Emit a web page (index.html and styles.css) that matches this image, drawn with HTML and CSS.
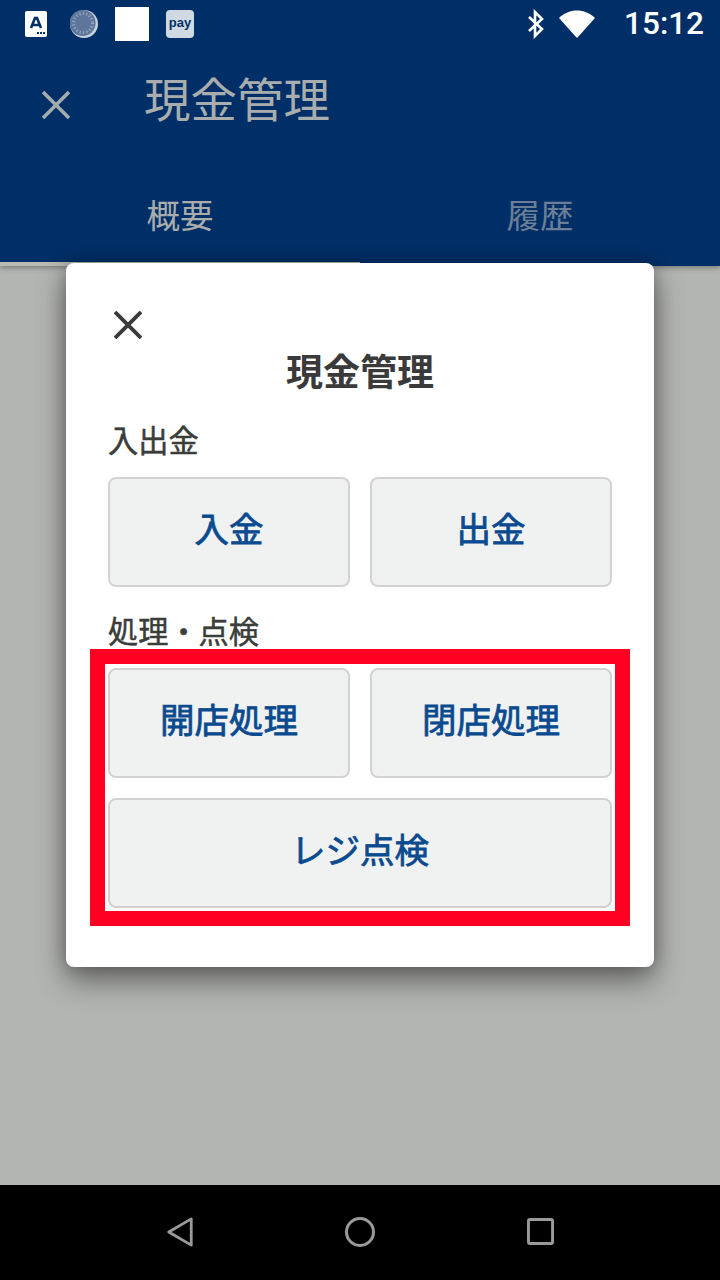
FILE: index.html
```html
<!DOCTYPE html>
<html lang="ja">
<head>
<meta charset="utf-8">
<title>現金管理</title>
<link rel="stylesheet" href="styles.css">
</head>
<body>
<div class="screen">
  <header class="appbar">
    <div class="status">
      <div class="status-left">
        <svg class="ic-a" viewBox="0 0 22 26"><rect width="22" height="26" rx="2" fill="#fff"/><path d="M6 17 L10 7 H12 L16 17 M7.5 14 H14.5" fill="none" stroke="#002f67" stroke-width="2.6"/><path d="M12 21h2v2h-2zM15 21h2v2h-2zM18 21h2v2h-2z" fill="#002f67"/></svg>
        <svg class="ic-sun" viewBox="0 0 28 28"><circle cx="14" cy="14" r="14" fill="#c9d2dc"/><circle cx="12.6" cy="13" r="13" fill="#5d7699"/><circle cx="13" cy="13" r="9.5" fill="none" stroke="#93a5bd" stroke-width="3" stroke-dasharray="1.2 2.2"/></svg>
        <div class="ic-white"></div>
        <div class="ic-pay">pay</div>
      </div>
      <div class="status-right">
        <svg class="ic-bt" viewBox="0 0 20 30"><path d="M3 8 L16 20 L9 27 V3 L16 10 L3 22" fill="none" stroke="#fff" stroke-width="2.6"/></svg>
        <svg class="ic-wifi" viewBox="0 0 36 28"><path d="M0 8 C10 -2 26 -2 36 8 L19 27 Q18 28 17 27 Z" fill="#fff"/></svg>
        <span class="clock">15:12</span>
      </div>
    </div>
    <div class="toolbar">
      <svg class="tb-close" viewBox="0 0 28 28"><path d="M1 1 L27 27 M27 1 L1 27" stroke="#a4abac" stroke-width="3.6" fill="none"/></svg>
      <span class="tb-title">現金管理</span>
    </div>
    <div class="tabs">
      <div class="tab tab-on">概要</div>
      <div class="tab tab-off">履歴</div>
    </div>
  </header>

  <main class="scrim"></main>

  <nav class="navbar">
    <svg class="nav-ic" viewBox="0 0 28 32"><path d="M2 16 L26 2 V30 Z" fill="none" stroke="#9a9a9a" stroke-width="3" stroke-linejoin="round"/></svg>
    <svg class="nav-ic" viewBox="0 0 32 32"><circle cx="16" cy="16" r="14.4" fill="none" stroke="#9a9a9a" stroke-width="3.2"/></svg>
    <svg class="nav-ic nav-square" viewBox="0 0 28 28"><rect x="1.5" y="1.5" width="25" height="25" rx="1.5" fill="none" stroke="#9a9a9a" stroke-width="3"/></svg>
  </nav>

  <section class="dialog">
    <svg class="dlg-close" viewBox="0 0 28 28"><path d="M1 1 L27 27 M27 1 L1 27" stroke="#3a3a3a" stroke-width="3.8" fill="none"/></svg>
    <h1 class="dlg-title">現金管理</h1>
    <h2 class="label label-first">入出金</h2>
    <div class="row">
      <div class="btn">入金</div>
      <div class="btn">出金</div>
    </div>
    <h2 class="label label-second">処理・点検</h2>
    <div class="frame">
      <div class="row">
        <div class="btn">開店処理</div>
        <div class="btn">閉店処理</div>
      </div>
      <div class="btn btn-wide">レジ点検</div>
    </div>
  </section>
</div>
</body>
</html>
```
FILE: styles.css
```css
* { box-sizing: border-box; }
html, body { margin: 0; padding: 0; }
body {
  width: 720px;
  height: 1280px;
  overflow: hidden;
  font-family: "Noto Sans CJK JP", "Noto Sans", sans-serif;
}
.screen {
  position: relative;
  width: 720px;
  height: 1280px;
  display: flex;
  flex-direction: column;
}
.appbar {
  height: 266px;
  background: #002f67;
  box-shadow: 0 2px 5px rgba(0, 0, 0, .3);
  position: relative;
  z-index: 1;
}
.status {
  height: 50px;
  display: flex;
  justify-content: space-between;
  align-items: center;
  padding: 0 16px 2px 25px;
}
.status-left, .status-right { display: flex; align-items: center; }
.ic-a { width: 22px; height: 26px; margin-right: 23px; }
.ic-sun { width: 28px; height: 28px; margin-right: 17px; }
.ic-white { width: 34px; height: 34px; background: #fff; margin-right: 17px; }
.ic-pay {
  width: 28px;
  height: 28px;
  border-radius: 4px;
  background: #d0d9e2;
  color: #002f67;
  font: 700 13px/26px "Liberation Sans", sans-serif;
  text-align: center;
}
.ic-bt { width: 20px; height: 30px; margin-right: 13px; }
.ic-wifi { width: 36px; height: 28px; margin-right: 29px; }
.clock {
  color: #fff;
  font: 500 31.5px/40px Roboto, sans-serif;
}
.toolbar {
  height: 102px;
  display: flex;
  align-items: flex-start;
  padding-left: 42px;
}
.tb-close { width: 28px; height: 28px; margin-top: 41px; }
.tb-title {
  margin-left: 74px;
  margin-top: 10px;
  color: #a9adad;
  font-size: 46.5px;
  line-height: 74px;
}
.tabs {
  display: flex;
  height: 114px;
  position: relative;
}
.tab {
  flex: 1;
  text-align: center;
  font-size: 33.5px;
  line-height: 48px;
  padding-top: 38px;
  color: #a9adad;
}
.tab-on { border-bottom: 4px solid #b9bab4; }
.tab-off { color: #6c7f96; }
.scrim { flex: 1; background: #b3b5b2; }
.navbar {
  height: 95px;
  background: #000;
  display: grid;
  grid-template-columns: repeat(3, 180px);
  justify-content: center;
  justify-items: center;
  align-items: center;
}
.nav-ic { height: 30px; width: 30px; margin-top: -2px; }
.nav-square { height: 27px; width: 27px; }
.dialog {
  position: absolute;
  z-index: 2;
  left: 66px;
  top: 263px;
  width: 588px;
  height: 704px;
  background: #fff;
  border-radius: 8px;
  padding: 48px 42px 0;
  box-shadow: 0 14px 30px rgba(0, 0, 0, .42), 0 0 18px rgba(0, 0, 0, .25);
}
.dlg-close { display: block; width: 28px; height: 28px; margin-left: 6px; }
.dlg-title {
  margin: 5px 0 0;
  text-align: center;
  font-size: 37px;
  line-height: 52px;
  font-weight: 700;
  color: #3a3a3a;
}
.label {
  margin: 0;
  font-size: 30.2px;
  line-height: 44px;
  font-weight: 400;
  -webkit-text-stroke: .5px #3a3d3a;
  color: #3a3d3a;
}
.label-first { margin-top: 21px; }
.label-second { margin-top: 21px; }
.row { display: flex; gap: 20px; }
.label-first + .row { margin-top: 16px; }
.btn {
  flex: 1;
  height: 110px;
  padding-bottom: 10px;
  background: #f0f1f1;
  border: 2px solid #d2d3d1;
  border-radius: 8px;
  display: flex;
  align-items: center;
  justify-content: center;
  color: #0a4a8f;
  font-size: 34.5px;
  font-weight: 400;
  -webkit-text-stroke: .8px #0a4a8f;
}
.frame {
  margin: -3px -18px 0;
  border: 15px solid #ff0022;
  padding: 4px 3px 3px;
  display: flex;
  flex-direction: column;
  gap: 20px;
}
.btn-wide { flex: none; width: 100%; }
```
